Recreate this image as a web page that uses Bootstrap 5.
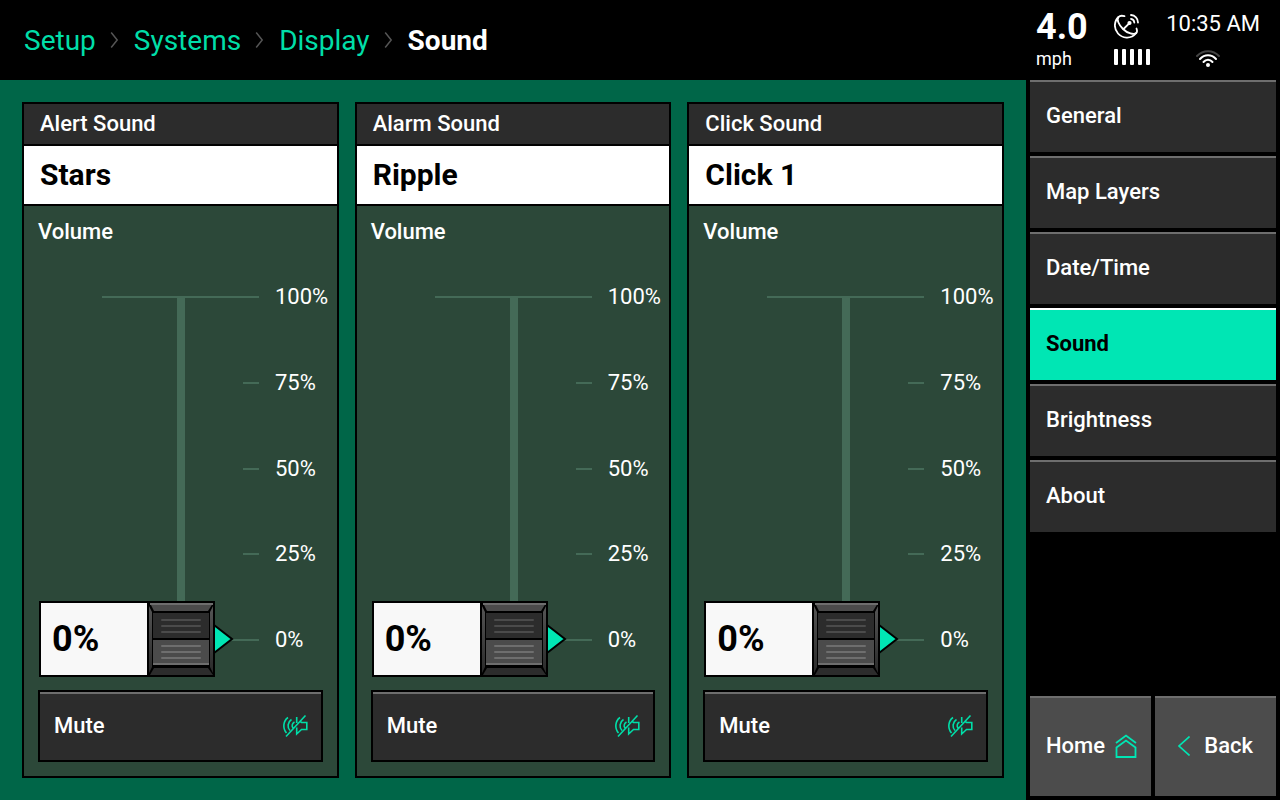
<!DOCTYPE html>
<html lang="en">
<head>
<meta charset="utf-8">
<meta name="viewport" content="width=device-width, initial-scale=1">
<title>Sound</title>
<link href="https://cdn.jsdelivr.net/npm/bootstrap@5.3.0/dist/css/bootstrap.min.css" rel="stylesheet">
<style>
  :root { --accent: #00e6b4; --link: #00dea8; --dark: #2c2c2c; --edge: #6e6e6e; --line: #446a57; }
  body { font-family: Roboto, "Liberation Sans", sans-serif; font-size: 22px; line-height: 26px; color: #fff; background: #000; }
  svg { display: block; flex: none; }
  .content-col { min-width: 0; }
  .topbar { height: 80px; padding: 2px 24px 0; }
  .topbar .breadcrumb { font-size: 28px; line-height: 32px; }
  .topbar a { color: var(--link); }
  .crumb-sep { margin: 0 15px 2px 14px; }
  .stage { background: #006648; padding: 22px; gap: 16px; }
  .panel { background: #2c4839; border: 2px solid #000; flex: 1 1 0; min-width: 0; }
  .panel-title { background: var(--dark); border-bottom: 2px solid #000; padding: 7px 16px; font-size: 22px; line-height: 26px; font-weight: 500; margin: 0; }
  .sound-pick { background: #fff; color: #000; border: 0; border-bottom: 2px solid #000; padding: 13px 16px; font-size: 30px; line-height: 32px; font-weight: 700; }
  .panel-main { padding: 13px 14px 14px; }
  .fader { margin: 39px 0 37px; min-height: 260px; }
  .tick-row { padding-left: 64px; gap: 16px; height: 26px; }
  .tick-box { width: 157px; flex: none; }
  .tick { width: 16px; height: 2px; background: var(--line); }
  .tick-long { width: 100%; }
  .track { left: 139px; width: 8px; top: 13px; bottom: 13px; background: var(--line); }
  .travel { left: 1px; width: 194px; top: 12px; bottom: 14px; }
  .knob { left: 0; transform: translateY(50%); height: 76px; }
  .knob-value { width: 108px; background: #f8f8f8; border: 2px solid #000; border-right-width: 0; color: #000; font-size: 36px; line-height: 44px; font-weight: 700; padding-left: 11px; }
  .fader-input { left: 0; top: -26px; width: 194px; height: calc(100% + 52px); margin: 0; opacity: 0; writing-mode: vertical-lr; direction: rtl; -webkit-appearance: slider-vertical; cursor: pointer; }
  .mute { height: 72px; background: var(--dark); color: #fff; border: 2px solid #000; box-shadow: inset 0 2px var(--edge); font-weight: 500; padding: 0 13px 0 14px; }
  .side { width: 254px; padding: 0 4px 4px; }
  .status { height: 80px; padding: 8px 16px 0 6px; display: grid; grid-template-columns: 78px 42px 1fr; grid-template-rows: 36px 30px; }
  .speed { font-size: 36px; line-height: 36px; font-weight: 700; padding-top: 2px; }
  .clock { padding-bottom: 4px; }
  .unit { font-size: 18px; line-height: 30px; }
  .side-btn { height: 72px; background: var(--dark); color: #fff; border: 0; border-top: 2px solid var(--edge); padding: 0 16px 2px; font-weight: 500; }
  .side-btn.active { background: var(--accent); border-top-color: #fff; color: #000; font-weight: 700; }
  .foot-btn { flex: 1 1 50%; height: 100px; background: #4c4c4c; color: #fff; border: 0; border-top: 2px solid var(--edge); padding: 0 14px 2px 16px; font-weight: 500; }
  .back-btn { padding: 0 23px 2px; }
</style>
</head>
<body>
<svg width="0" height="0" class="position-absolute" aria-hidden="true">
  <defs>
    <linearGradient id="sideShade" x1="0" y1="0" x2="0" y2="1"><stop offset="0" stop-color="#555"/><stop offset="1" stop-color="#2a2a2a"/></linearGradient>
    <symbol id="sep" viewBox="0 0 9 18"><path d="M1.2 1.5 7.2 9 1.2 16.5" fill="none" stroke="#555" stroke-width="1.5"/></symbol>
    <symbol id="knobArt" viewBox="0 0 87 76">
      <path d="M67 24 85 38 67 52Z" fill="#00e6b4" stroke="#000" stroke-width="2"/>
      <rect width="68" height="76" fill="#000"/>
      <path d="M3 2H66L61 10H7Z" fill="#4b4b4b"/>
      <rect x="3" y="2" width="63" height="2" fill="#6e6e6e"/>
      <path d="M3 74H66L61 67H7Z" fill="#2c2c2c"/>
      <path d="M2 5 5 11V66L2 72ZM66 5 63 11V66L66 72Z" fill="url(#sideShade)"/>
      <rect x="6" y="12" width="56" height="25" fill="#2c2c2c"/>
      <rect x="6" y="39" width="56" height="25" fill="#4b4b4b"/>
      <rect x="6" y="62" width="56" height="2" fill="#6e6e6e"/>
      <path d="M15 19H53M15 25H53M15 31H53" stroke="#4b4b4b" stroke-width="2" stroke-linecap="round"/>
      <path d="M15 45H53M15 51H53M15 57H53" stroke="#6e6e6e" stroke-width="2" stroke-linecap="round"/>
    </symbol>
    <symbol id="muted" viewBox="0 0 26 24">
      <path d="M6 3.500C1 7 .5 14.500 4.500 19M9.500 5.500C5.500 8 5 13.500 8 16.500M12.500 8C10 9.500 9.500 12 11 14M4 22.500 23.500 1.500M14.700 3V9M14.700 13.500V20L19.500 15.500H24.800V8.500H19.500L17.500 7" fill="none" stroke="#00dea8" stroke-width="1.6"/>
    </symbol>
  </defs>
</svg>

<div class="d-flex min-vh-100">
  <div class="content-col d-flex flex-column flex-grow-1">
    <header class="topbar d-flex align-items-center">
      <nav aria-label="Breadcrumb">
        <ol class="breadcrumb d-flex align-items-center flex-nowrap m-0">
          <li><a class="text-decoration-none" href="#setup">Setup</a></li>
          <li class="crumb-sep" aria-hidden="true"><svg width="9" height="18"><use href="#sep"/></svg></li>
          <li><a class="text-decoration-none" href="#systems">Systems</a></li>
          <li class="crumb-sep" aria-hidden="true"><svg width="9" height="18"><use href="#sep"/></svg></li>
          <li><a class="text-decoration-none" href="#display">Display</a></li>
          <li class="crumb-sep" aria-hidden="true"><svg width="9" height="18"><use href="#sep"/></svg></li>
          <li class="fw-bold" aria-current="page">Sound</li>
        </ol>
      </nav>
    </header>

    <main class="stage d-flex flex-grow-1">
      <section class="panel d-flex flex-column">
        <h2 class="panel-title">Alert Sound</h2>
        <button type="button" class="sound-pick text-start">Stars</button>
        <div class="panel-main d-flex flex-column flex-grow-1">
          <label class="fw-medium" for="vol-alert">Volume</label>
          <div class="fader position-relative d-flex flex-column justify-content-between flex-grow-1">
            <div class="track position-absolute"></div>
            <div class="tick-row d-flex align-items-center"><div class="tick-box"><div class="tick tick-long"></div></div><span>100%</span></div>
            <div class="tick-row d-flex align-items-center"><div class="tick-box"><div class="tick ms-auto"></div></div><span>75%</span></div>
            <div class="tick-row d-flex align-items-center"><div class="tick-box"><div class="tick ms-auto"></div></div><span>50%</span></div>
            <div class="tick-row d-flex align-items-center"><div class="tick-box"><div class="tick ms-auto"></div></div><span>25%</span></div>
            <div class="tick-row d-flex align-items-center"><div class="tick-box"><div class="tick tick-long"></div></div><span>0%</span></div>
            <div class="travel position-absolute">
              <div class="knob position-absolute d-flex" style="bottom:0%">
                <output class="knob-value d-flex align-items-center" for="vol-alert">0%</output>
                <svg width="87" height="76"><use href="#knobArt"/></svg>
              </div>
              <input type="range" class="fader-input position-absolute" id="vol-alert" min="0" max="100" value="0">
            </div>
          </div>
          <button type="button" class="mute d-flex align-items-center justify-content-between">Mute <svg width="26" height="24"><use href="#muted"/></svg></button>
        </div>
      </section>

      <section class="panel d-flex flex-column">
        <h2 class="panel-title">Alarm Sound</h2>
        <button type="button" class="sound-pick text-start">Ripple</button>
        <div class="panel-main d-flex flex-column flex-grow-1">
          <label class="fw-medium" for="vol-alarm">Volume</label>
          <div class="fader position-relative d-flex flex-column justify-content-between flex-grow-1">
            <div class="track position-absolute"></div>
            <div class="tick-row d-flex align-items-center"><div class="tick-box"><div class="tick tick-long"></div></div><span>100%</span></div>
            <div class="tick-row d-flex align-items-center"><div class="tick-box"><div class="tick ms-auto"></div></div><span>75%</span></div>
            <div class="tick-row d-flex align-items-center"><div class="tick-box"><div class="tick ms-auto"></div></div><span>50%</span></div>
            <div class="tick-row d-flex align-items-center"><div class="tick-box"><div class="tick ms-auto"></div></div><span>25%</span></div>
            <div class="tick-row d-flex align-items-center"><div class="tick-box"><div class="tick tick-long"></div></div><span>0%</span></div>
            <div class="travel position-absolute">
              <div class="knob position-absolute d-flex" style="bottom:0%">
                <output class="knob-value d-flex align-items-center" for="vol-alarm">0%</output>
                <svg width="87" height="76"><use href="#knobArt"/></svg>
              </div>
              <input type="range" class="fader-input position-absolute" id="vol-alarm" min="0" max="100" value="0">
            </div>
          </div>
          <button type="button" class="mute d-flex align-items-center justify-content-between">Mute <svg width="26" height="24"><use href="#muted"/></svg></button>
        </div>
      </section>

      <section class="panel d-flex flex-column">
        <h2 class="panel-title">Click Sound</h2>
        <button type="button" class="sound-pick text-start">Click 1</button>
        <div class="panel-main d-flex flex-column flex-grow-1">
          <label class="fw-medium" for="vol-click">Volume</label>
          <div class="fader position-relative d-flex flex-column justify-content-between flex-grow-1">
            <div class="track position-absolute"></div>
            <div class="tick-row d-flex align-items-center"><div class="tick-box"><div class="tick tick-long"></div></div><span>100%</span></div>
            <div class="tick-row d-flex align-items-center"><div class="tick-box"><div class="tick ms-auto"></div></div><span>75%</span></div>
            <div class="tick-row d-flex align-items-center"><div class="tick-box"><div class="tick ms-auto"></div></div><span>50%</span></div>
            <div class="tick-row d-flex align-items-center"><div class="tick-box"><div class="tick ms-auto"></div></div><span>25%</span></div>
            <div class="tick-row d-flex align-items-center"><div class="tick-box"><div class="tick tick-long"></div></div><span>0%</span></div>
            <div class="travel position-absolute">
              <div class="knob position-absolute d-flex" style="bottom:0%">
                <output class="knob-value d-flex align-items-center" for="vol-click">0%</output>
                <svg width="87" height="76"><use href="#knobArt"/></svg>
              </div>
              <input type="range" class="fader-input position-absolute" id="vol-click" min="0" max="100" value="0">
            </div>
          </div>
          <button type="button" class="mute d-flex align-items-center justify-content-between">Mute <svg width="26" height="24"><use href="#muted"/></svg></button>
        </div>
      </section>
    </main>
  </div>

  <aside class="side d-flex flex-column flex-shrink-0">
    <div class="status align-items-center">
      <div class="speed">4.0</div>
      <svg width="26" height="26" viewBox="0 0 26 26" fill="none" stroke="#fff" stroke-width="1.8" stroke-linecap="round" stroke-linejoin="round" aria-label="GPS">
        <path d="M10.500 3.200C8 2.500 5.800 2.600 4.500 4C2.500 6.500 4.500 11.500 9 16S20 22 22.300 20C23.200 19 23.300 17.500 22.500 15.500"/>
        <path d="M4.500 4C-.5 9 0 16 4 20.500S16.500 27 22.300 20M9.500 16 16 9.700"/>
        <circle cx="15.500" cy="10" r="1.200" fill="#fff"/><path d="M17 5.800A4 4 0 0 1 20.300 9.500M17 2A7.500 7.500 0 0 1 24 9.500"/>
      </svg>
      <time class="clock text-end text-nowrap">10:35 AM</time>
      <div class="unit">mph</div>
      <svg class="mb-1" width="36" height="16" viewBox="0 0 36 16" fill="#fff" aria-label="Signal"><rect width="4" height="16" rx="1"/><rect x="8" width="4" height="16" rx="1"/><rect x="16" width="4" height="16" rx="1"/><rect x="24" width="4" height="16" rx="1"/><rect x="32" width="4" height="16" rx="1"/></svg>
      <svg class="mx-auto" width="24" height="18" viewBox="0 0 24 18" fill="none" stroke="#fff" stroke-width="2" stroke-linecap="round" aria-label="Wi-Fi">
        <path d="M1 6C7-.5 17-.5 23 6" stroke="#444"/><path d="M4 9C8.500 4 15.500 4 20 9M7.500 12C10 9 14 9 16.500 12"/><circle cx="12" cy="15" r="2" fill="#fff" stroke="none"/>
      </svg>
    </div>
    <nav class="d-flex flex-column gap-1" aria-label="Display settings">
      <button type="button" class="side-btn text-start">General</button>
      <button type="button" class="side-btn text-start">Map Layers</button>
      <button type="button" class="side-btn text-start">Date/Time</button>
      <button type="button" class="side-btn text-start active" aria-current="page">Sound</button>
      <button type="button" class="side-btn text-start">Brightness</button>
      <button type="button" class="side-btn text-start">About</button>
    </nav>
    <div class="d-flex gap-1 mt-auto">
      <button type="button" class="foot-btn d-flex align-items-center justify-content-between">Home
        <svg width="22" height="24" viewBox="0 0 22 24" fill="none" stroke="#00e6b4" stroke-width="1.800"><path d="M1 9 11 1.500 21 9M1.500 23V13.500L11 6.500 20.500 13.500V23Z"/></svg>
      </button>
      <button type="button" class="foot-btn back-btn d-flex align-items-center justify-content-between">
        <svg width="12" height="20" viewBox="0 0 12 20" fill="none" stroke="#00e6b4" stroke-width="1.600"><path d="M11.500.5 1 10 11.500 19.500"/></svg>
        Back
      </button>
    </div>
  </aside>
</div>

<script src="https://cdn.jsdelivr.net/npm/bootstrap@5.3.0/dist/js/bootstrap.bundle.min.js"></script>
<script>
  document.querySelectorAll('.fader-input').forEach(function (input) {
    input.addEventListener('input', function () {
      var knob = input.previousElementSibling;
      knob.style.bottom = input.value + '%';
      knob.querySelector('output').textContent = input.value + '%';
    });
  });
</script>
</body>
</html>
